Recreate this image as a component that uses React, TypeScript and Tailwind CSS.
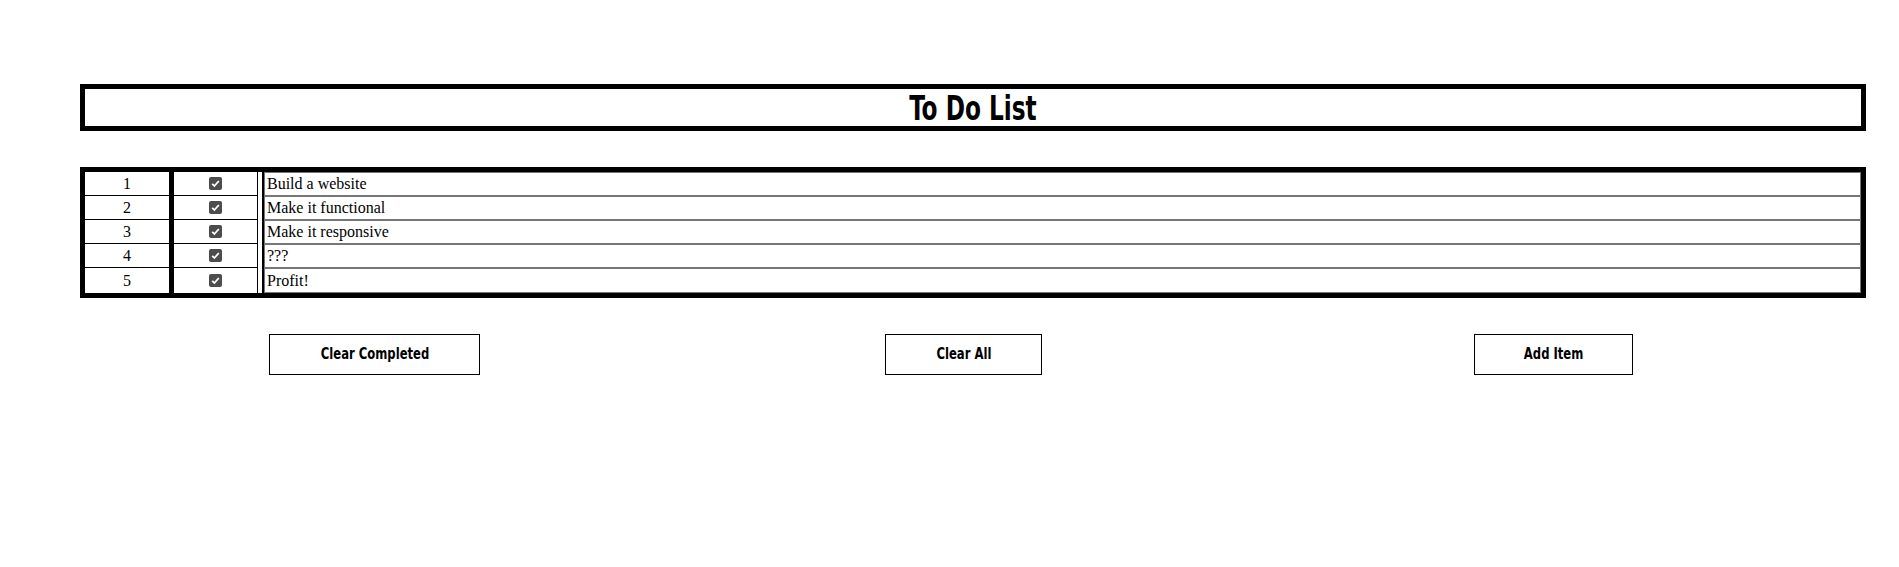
import React from "react";

const items = [
  "Build a website",
  "Make it functional",
  "Make it responsive",
  "???",
  "Profit!",
];

const heading = "font-['Impact','Liberation_Sans_Narrow','DejaVu_Sans_Condensed',sans-serif] font-bold text-black";

const CheckMark = () => (
  <span className="flex h-[13px] w-[13px] items-center justify-center rounded-[2px] bg-[#4d4d4d]">
    <svg width="11" height="11" viewBox="0 0 11 11">
      <path d="M2.2 5.8 L4.4 8 L8.8 3" fill="none" stroke="white" strokeWidth="1.8" />
    </svg>
  </span>
);

const App = () => {
  return (
    <div className="min-h-[567px] bg-white pl-[80px] pt-[84px] font-['Liberation_Serif',serif] text-[16px] text-black">
      <div className="w-[1786px]">
        <header className="flex h-[47px] items-center justify-center border-[5px] border-black">
          <h1 className={`${heading} inline-block scale-x-[0.76] text-[34px] leading-none`}>To Do List</h1>
        </header>

        <div className="mt-[36px] border-[5px] border-black">
          {items.map((item, index) => {
            const last = index === items.length - 1;
            return (
              <div key={item} className={last ? "flex h-[25px]" : "flex h-[24px]"}>
                <div
                  className={`flex w-[84px] items-center justify-center ${last ? "" : "border-b border-black"}`}
                >
                  {index + 1}
                </div>
                <div className="w-[5px] bg-black" />
                <div
                  className={`flex w-[84px] items-center justify-center border-r border-black ${last ? "" : "border-b"}`}
                >
                  <CheckMark />
                </div>
                <div className="w-[4px]" />
                <div className="w-[2px] bg-black" />
                <div className="flex flex-1 items-center border border-[#767676] px-[2px]">
                  {item}
                </div>
              </div>
            );
          })}
        </div>

        <div className="mt-[36px] grid w-[1768px] grid-cols-3">
          <button className={`${heading} h-[41px] w-[211px] justify-self-center border border-black bg-white text-[15px]`}>
            <span className="inline-block scale-x-[0.86]">Clear Completed</span>
          </button>
          <button className={`${heading} h-[41px] w-[157px] justify-self-center border border-black bg-white text-[15px]`}>
            <span className="inline-block scale-x-[0.86]">Clear All</span>
          </button>
          <button className={`${heading} h-[41px] w-[159px] justify-self-center border border-black bg-white text-[15px]`}>
            <span className="inline-block scale-x-[0.86]">Add Item</span>
          </button>
        </div>
      </div>
    </div>
  );
};

export default App;
